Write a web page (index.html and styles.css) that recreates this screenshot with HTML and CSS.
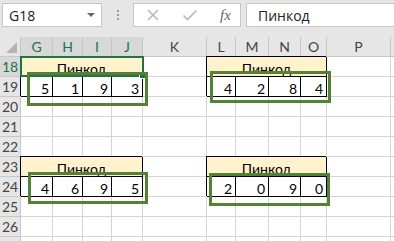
FILE: index.html
```html
<!DOCTYPE html>
<html lang="ru">

<head>
    <meta charset="UTF-8">
    <title>Пинкод</title>
    <link rel="stylesheet" href="styles.css">
</head>

<body>
    <div class="bar">
        <div class="name-box">
            <span>G18</span>
            <span class="caret"></span>
        </div>
        <div class="grip"><i></i><i></i><i></i></div>
        <div class="fn-box">
            <svg class="fn-icon" width="14" height="14" viewBox="0 0 14 14">
                <path d="M2 2 L12 12 M12 2 L2 12" stroke="#b8b8b8" stroke-width="1.6" fill="none" />
            </svg>
            <svg class="fn-icon" width="16" height="14" viewBox="0 0 16 14">
                <path d="M1.5 7.5 L5.5 11.5 L14.5 2.5" stroke="#b8b8b8" stroke-width="1.6" fill="none" />
            </svg>
            <span class="fx">fx</span>
        </div>
        <div class="formula">Пинкод</div>
    </div>

    <div class="sheet">
        <!-- заголовки столбцов -->
        <div class="h corner"><span class="tri"></span></div>
        <div class="h sel">G</div>
        <div class="h sel">H</div>
        <div class="h sel">I</div>
        <div class="h sel">J</div>
        <div class="h">K</div>
        <div class="h">L</div>
        <div class="h">M</div>
        <div class="h">N</div>
        <div class="h">O</div>
        <div class="h">P</div>
        <div class="h"></div>

        <div class="h rh sel">18</div>
        <div class="c m t">Пинкод</div>
        <div class="c"></div>
        <div class="c m t">Пинкод</div>
        <div class="c"></div>
        <div class="c"></div>

        <div class="h rh">19</div>
        <div class="c t">5</div>
        <div class="c t">1</div>
        <div class="c t">9</div>
        <div class="c t">3</div>
        <div class="c"></div>
        <div class="c t">4</div>
        <div class="c t">2</div>
        <div class="c t">8</div>
        <div class="c t">4</div>
        <div class="c"></div>
        <div class="c"></div>

        <div class="h rh">20</div>
        <div class="c"></div><div class="c"></div><div class="c"></div><div class="c"></div><div class="c"></div>
        <div class="c"></div><div class="c"></div><div class="c"></div><div class="c"></div><div class="c"></div><div class="c"></div>

        <div class="h rh">21</div>
        <div class="c"></div><div class="c"></div><div class="c"></div><div class="c"></div><div class="c"></div>
        <div class="c"></div><div class="c"></div><div class="c"></div><div class="c"></div><div class="c"></div><div class="c"></div>

        <div class="h rh">22</div>
        <div class="c"></div><div class="c"></div><div class="c"></div><div class="c"></div><div class="c"></div>
        <div class="c"></div><div class="c"></div><div class="c"></div><div class="c"></div><div class="c"></div><div class="c"></div>

        <div class="h rh">23</div>
        <div class="c m t">Пинкод</div>
        <div class="c"></div>
        <div class="c m t">Пинкод</div>
        <div class="c"></div>
        <div class="c"></div>

        <div class="h rh">24</div>
        <div class="c t">4</div>
        <div class="c t">6</div>
        <div class="c t">9</div>
        <div class="c t">5</div>
        <div class="c"></div>
        <div class="c t">2</div>
        <div class="c t">0</div>
        <div class="c t">9</div>
        <div class="c t">0</div>
        <div class="c"></div>
        <div class="c"></div>

        <div class="h rh">25</div>
        <div class="c"></div><div class="c"></div><div class="c"></div><div class="c"></div><div class="c"></div>
        <div class="c"></div><div class="c"></div><div class="c"></div><div class="c"></div><div class="c"></div><div class="c"></div>

        <div class="h rh">26</div>
        <div class="c"></div><div class="c"></div><div class="c"></div><div class="c"></div><div class="c"></div>
        <div class="c"></div><div class="c"></div><div class="c"></div><div class="c"></div><div class="c"></div><div class="c"></div>

        <div class="h rh"></div>
        <div class="c"></div><div class="c"></div><div class="c"></div><div class="c"></div><div class="c"></div>
        <div class="c"></div><div class="c"></div><div class="c"></div><div class="c"></div><div class="c"></div><div class="c"></div>

        <!-- выделение и фигуры поверх ячеек -->
        <div class="selection"><span class="handle"></span></div>
        <div class="shape shape-1"></div>
        <div class="shape shape-2"></div>
        <div class="shape shape-3"></div>
        <div class="shape shape-4"></div>
    </div>
</body>

</html>
```

FILE: styles.css
```css
body {
    margin: 0;
    width: 394px;
    height: 241px;
    overflow: hidden;
    background-color: #e6e6e6;
    font-family: "Open Sans", "Noto Sans", sans-serif;
}

.bar {
    height: 37px;
    display: flex;
    align-items: flex-start;
    padding-top: 3px;
    box-sizing: border-box;
    background-color: #e6e6e6;
}

.name-box,
.fn-box,
.formula {
    height: 24px;
    box-sizing: border-box;
    background-color: white;
    border: 1px solid #c6c6c6;
    display: flex;
    align-items: center;
    font-size: 14px;
    color: #222;
}

.name-box {
    width: 100px;
    margin-left: 2px;
    padding: 0 6px;
    justify-content: space-between;
}

.caret {
    width: 0;
    height: 0;
    border-left: 4px solid transparent;
    border-right: 4px solid transparent;
    border-top: 4px solid #666;
}

.grip {
    width: 31px;
    height: 24px;
    display: flex;
    flex-direction: column;
    align-items: center;
    justify-content: center;
    gap: 2px;
}

.grip i {
    width: 2px;
    height: 2px;
    background-color: #999;
}

.fn-box {
    width: 108px;
    padding-left: 12px;
    gap: 22px;
}

.fx {
    font-family: "Liberation Serif", serif;
    font-style: italic;
    font-size: 15px;
    color: #666;
}

.formula {
    flex: 1;
    margin-left: 5px;
    padding-left: 11px;
    border-right: none;
}

.sheet {
    position: relative;
    display: grid;
    grid-template-columns: 21px 32px 30px 29px 31px 64px 29px 33px 32px 26px 64px 64px;
    grid-auto-rows: 20px;
    height: 204px;
    overflow: hidden;
    background-color: white;
}

.h {
    box-sizing: border-box;
    background-color: #e6e6e6;
    border-right: 1px solid #c6c6c6;
    border-bottom: 1px solid #c6c6c6;
    text-align: center;
    font-family: Lato, "Open Sans", sans-serif;
    font-size: 14px;
    line-height: 20px;
    color: #444;
}

.h.sel {
    background-color: #d8d8d8;
    color: #217346;
}

.corner {
    position: relative;
}

.tri {
    position: absolute;
    right: 3px;
    bottom: 3px;
    width: 0;
    height: 0;
    border-left: 11px solid transparent;
    border-bottom: 11px solid #b4b4b4;
}

.c {
    box-sizing: border-box;
    border-right: 1px solid #d4d4d4;
    border-bottom: 1px solid #d4d4d4;
    padding-right: 3px;
    text-align: right;
    font-family: Lato, "Open Sans", sans-serif;
    font-size: 14px;
    line-height: 23px;
    color: #000;
}

.c.t {
    border-right-color: #000;
    border-bottom-color: #000;
    box-shadow: -1px -1px 0 #000;
}

.c.m {
    grid-column: span 4;
    background-color: #fff2cc;
    text-align: center;
    padding-right: 0;
}

.selection {
    position: absolute;
    left: 20px;
    top: 19px;
    width: 124px;
    height: 21px;
    box-sizing: border-box;
    border: 2px solid #217346;
}

.handle {
    position: absolute;
    right: -4px;
    bottom: -4px;
    width: 5px;
    height: 5px;
    background-color: #217346;
    border: 1px solid white;
}

.shape {
    position: absolute;
    box-sizing: border-box;
    border: 3px solid #548235;
}

.shape-1 {
    left: 27px;
    top: 35px;
    width: 121px;
    height: 34px;
}

.shape-2 {
    left: 210px;
    top: 34px;
    width: 121px;
    height: 32px;
}

.shape-3 {
    left: 28px;
    top: 135px;
    width: 120px;
    height: 32px;
}

.shape-4 {
    left: 209px;
    top: 136px;
    width: 121px;
    height: 33px;
}
```
